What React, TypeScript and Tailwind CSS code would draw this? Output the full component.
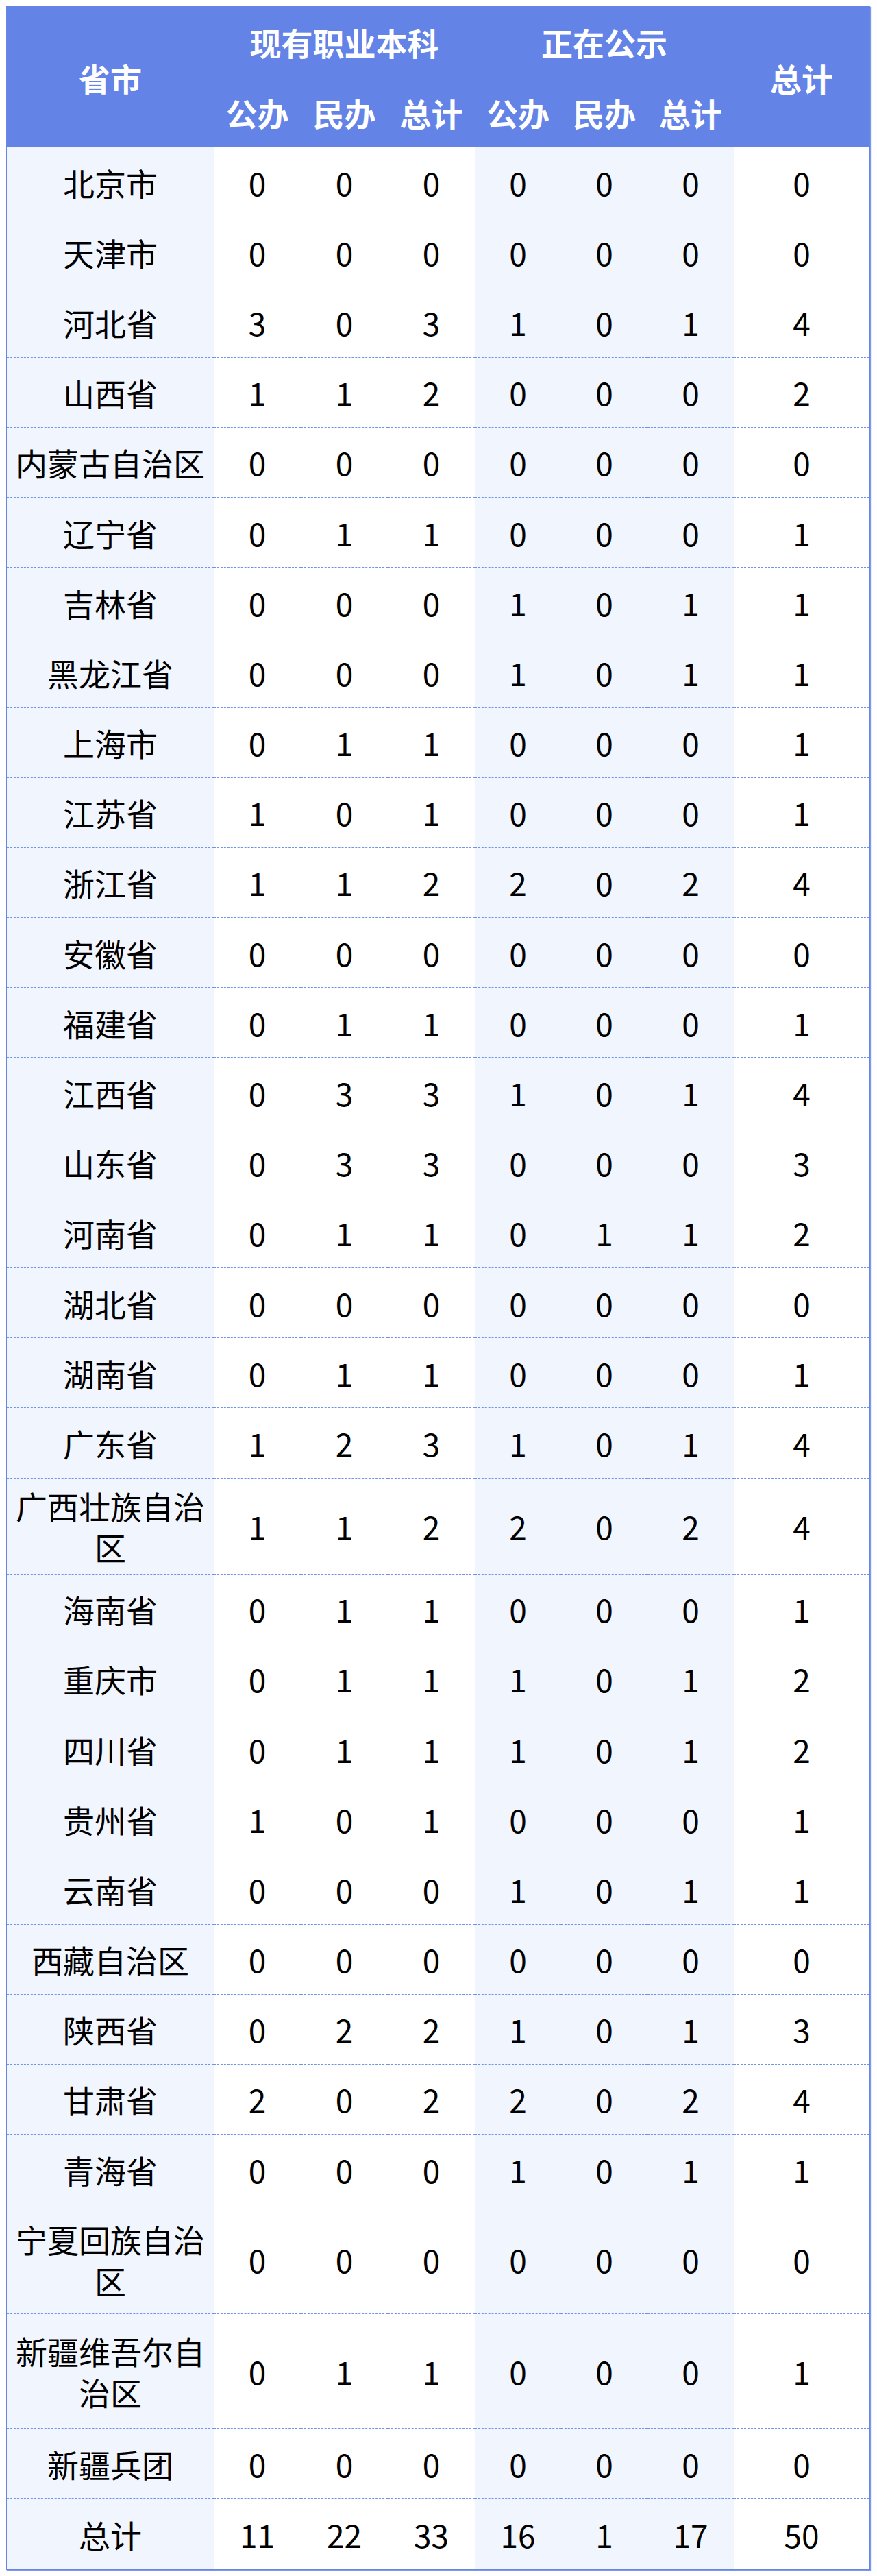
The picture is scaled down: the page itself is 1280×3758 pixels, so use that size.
import React from "react";

type Row = { name: string; v: number[]; h?: string };

const rows: Row[] = [
  { name: "北京市", v: [0, 0, 0, 0, 0, 0, 0] },
  { name: "天津市", v: [0, 0, 0, 0, 0, 0, 0] },
  { name: "河北省", v: [3, 0, 3, 1, 0, 1, 4] },
  { name: "山西省", v: [1, 1, 2, 0, 0, 0, 2] },
  { name: "内蒙古自治区", v: [0, 0, 0, 0, 0, 0, 0] },
  { name: "辽宁省", v: [0, 1, 1, 0, 0, 0, 1] },
  { name: "吉林省", v: [0, 0, 0, 1, 0, 1, 1] },
  { name: "黑龙江省", v: [0, 0, 0, 1, 0, 1, 1] },
  { name: "上海市", v: [0, 1, 1, 0, 0, 0, 1] },
  { name: "江苏省", v: [1, 0, 1, 0, 0, 0, 1] },
  { name: "浙江省", v: [1, 1, 2, 2, 0, 2, 4] },
  { name: "安徽省", v: [0, 0, 0, 0, 0, 0, 0] },
  { name: "福建省", v: [0, 1, 1, 0, 0, 0, 1] },
  { name: "江西省", v: [0, 3, 3, 1, 0, 1, 4] },
  { name: "山东省", v: [0, 3, 3, 0, 0, 0, 3] },
  { name: "河南省", v: [0, 1, 1, 0, 1, 1, 2] },
  { name: "湖北省", v: [0, 0, 0, 0, 0, 0, 0] },
  { name: "湖南省", v: [0, 1, 1, 0, 0, 0, 1] },
  { name: "广东省", v: [1, 2, 3, 1, 0, 1, 4] },
  { name: "广西壮族自治区", v: [1, 1, 2, 2, 0, 2, 4], h: "h-[140px]" },
  { name: "海南省", v: [0, 1, 1, 0, 0, 0, 1] },
  { name: "重庆市", v: [0, 1, 1, 1, 0, 1, 2] },
  { name: "四川省", v: [0, 1, 1, 1, 0, 1, 2] },
  { name: "贵州省", v: [1, 0, 1, 0, 0, 0, 1] },
  { name: "云南省", v: [0, 0, 0, 1, 0, 1, 1] },
  { name: "西藏自治区", v: [0, 0, 0, 0, 0, 0, 0] },
  { name: "陕西省", v: [0, 2, 2, 1, 0, 1, 3] },
  { name: "甘肃省", v: [2, 0, 2, 2, 0, 2, 4] },
  { name: "青海省", v: [0, 0, 0, 1, 0, 1, 1] },
  { name: "宁夏回族自治区", v: [0, 0, 0, 0, 0, 0, 0], h: "h-[160px]" },
  { name: "新疆维吾尔自治区", v: [0, 1, 1, 0, 0, 0, 1], h: "h-[167px]" },
  { name: "新疆兵团", v: [0, 0, 0, 0, 0, 0, 0] },
  { name: "总计", v: [11, 22, 33, 16, 1, 17, 50] },
];

const light = "bg-[#f1f5fe]";

export default function App() {
  return (
    <div
      className="bg-white pt-[9px] pl-[9px] pb-[10px]"
      style={{ fontFamily: '"Noto Sans CJK SC", "Noto Sans", sans-serif' }}
    >
      <div className="w-[1261px] border border-[#6686e6] shadow-[1px_1px_1px_#7d98ec]">
        <table className="w-full table-fixed border-separate border-spacing-0 text-[46px] leading-[60px] text-black">
          <colgroup>
            <col className="w-[302px]" />
            <col className="w-[127px]" />
            <col className="w-[127px]" />
            <col className="w-[127px]" />
            <col className="w-[126px]" />
            <col className="w-[126px]" />
            <col className="w-[126px]" />
            <col />
          </colgroup>
          <thead className="bg-[#6383e6] font-bold text-white">
            <tr className="h-[102px]">
              <th rowSpan={2} className="font-bold">省市</th>
              <th colSpan={3} className="font-bold">现有职业本科</th>
              <th colSpan={3} className="font-bold">正在公示</th>
              <th rowSpan={2} className="font-bold">总计</th>
            </tr>
            <tr className="h-[103px]">
              {["公办", "民办", "总计", "公办", "民办", "总计"].map((t, i) => (
                <th key={i} className="font-bold">{t}</th>
              ))}
            </tr>
          </thead>
          <tbody>
            {rows.map((r, ri) => {
              const last = ri === rows.length - 1;
              const line = last ? "" : "border-b border-dashed border-[#7092ea]";
              return (
                <tr key={r.name} className={r.h ?? "h-[102.2px]"}>
                  <td className={`${light} ${line} px-[8px] text-center align-middle`}>
                    {r.name}
                  </td>
                  {r.v.map((n, i) => (
                    <td
                      key={i}
                      className={`${i >= 3 && i <= 5 ? light : "bg-white"} ${line} text-center align-middle`}
                    >
                      {n}
                    </td>
                  ))}
                </tr>
              );
            })}
          </tbody>
        </table>
      </div>
    </div>
  );
}
